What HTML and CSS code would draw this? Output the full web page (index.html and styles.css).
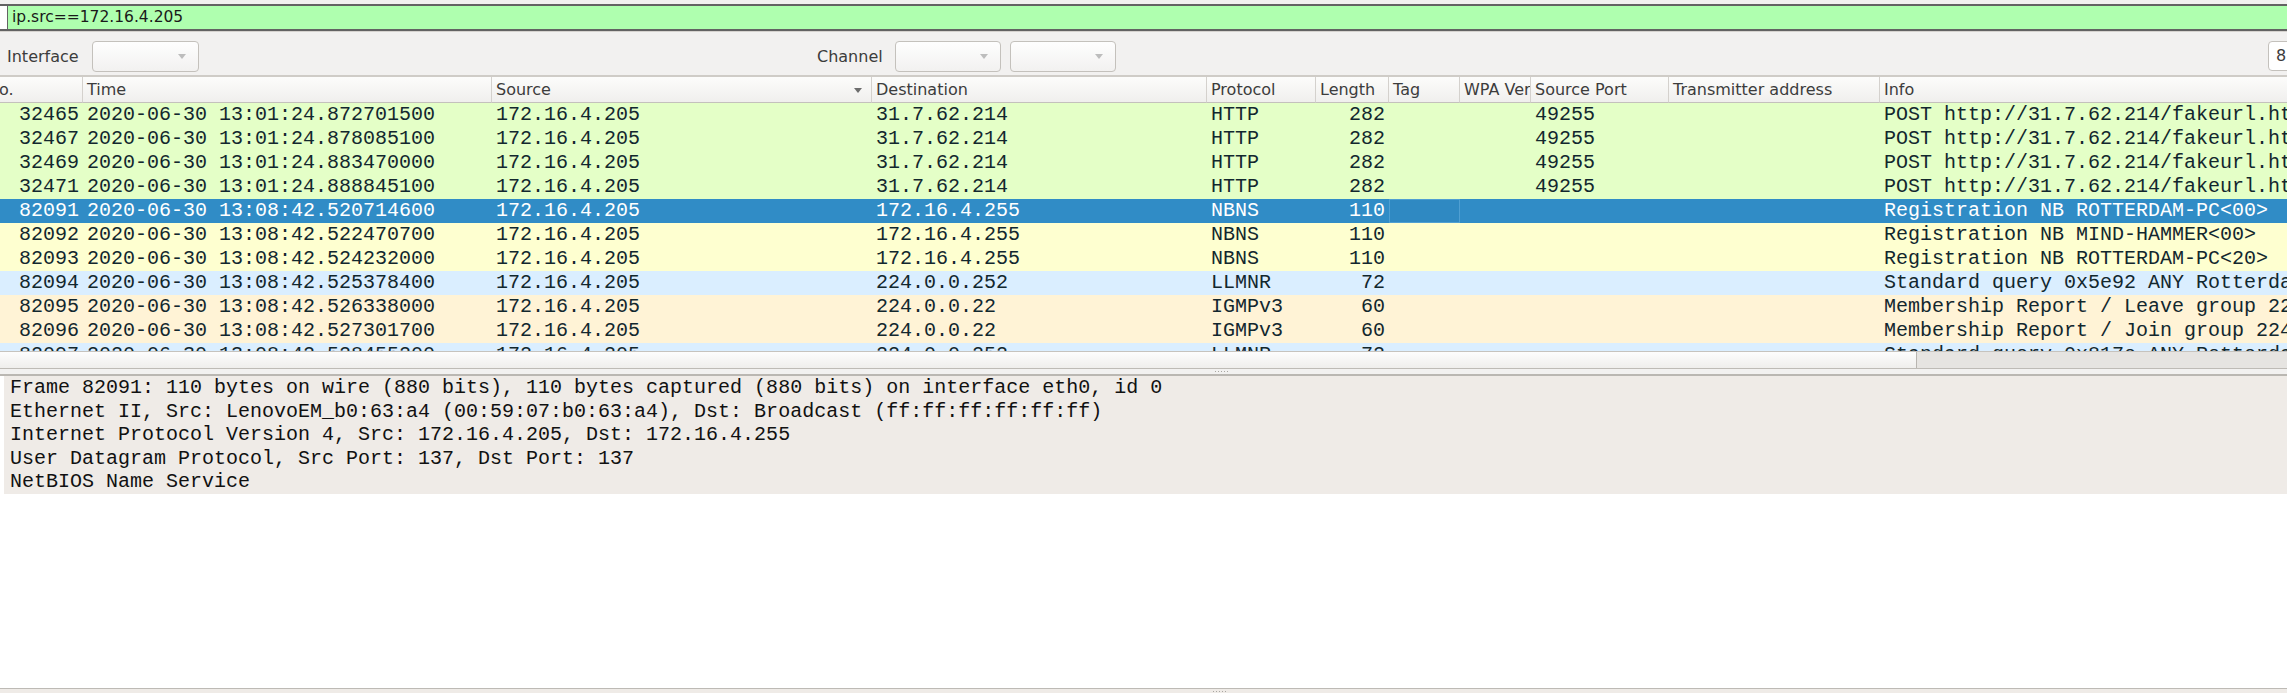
FILE: index.html
```html
<!DOCTYPE html>
<html>
<head>
<meta charset="utf-8">
<title>Wireshark</title>
<link rel="stylesheet" href="styles.css">
</head>
<body>
<div class="filterbar">
  <div class="filter"><span class="bm"></span><span class="ftext">ip.src==172.16.4.205</span></div>
</div>
<div class="toolbar">
  <span class="lbl lbl-if">Interface</span><span class="combo c1"></span>
  <span class="lbl lbl-ch">Channel</span><span class="combo c2"></span><span class="combo c3"></span>
  <span class="spin">8</span>
</div>
<div class="plist">
  <table class="packets">
    <colgroup>
      <col class="w-no"><col class="w-time"><col class="w-src"><col class="w-dst"><col class="w-proto"><col class="w-len"><col class="w-tag"><col class="w-wpa"><col class="w-sport"><col class="w-tx"><col class="w-info">
    </colgroup>
    <thead>
      <tr><th>No.</th><th>Time</th><th class="sorted"><span class="arrow"></span>Source</th><th>Destination</th><th>Protocol</th><th>Length</th><th>Tag</th><th>WPA Version</th><th>Source Port</th><th>Transmitter address</th><th class="last">Info</th></tr>
    </thead>
    <tbody>
      <tr class="http"><td class="r">32465</td><td>2020-06-30 13:01:24.872701500</td><td>172.16.4.205</td><td>31.7.62.214</td><td>HTTP</td><td class="r">282</td><td></td><td></td><td>49255</td><td></td><td>POST http://31.7.62.214/fakeurl.htm HTTP/1.1  (application/x-www-form-urlencoded)</td></tr>
      <tr class="http"><td class="r">32467</td><td>2020-06-30 13:01:24.878085100</td><td>172.16.4.205</td><td>31.7.62.214</td><td>HTTP</td><td class="r">282</td><td></td><td></td><td>49255</td><td></td><td>POST http://31.7.62.214/fakeurl.htm HTTP/1.1  (application/x-www-form-urlencoded)</td></tr>
      <tr class="http"><td class="r">32469</td><td>2020-06-30 13:01:24.883470000</td><td>172.16.4.205</td><td>31.7.62.214</td><td>HTTP</td><td class="r">282</td><td></td><td></td><td>49255</td><td></td><td>POST http://31.7.62.214/fakeurl.htm HTTP/1.1  (application/x-www-form-urlencoded)</td></tr>
      <tr class="http"><td class="r">32471</td><td>2020-06-30 13:01:24.888845100</td><td>172.16.4.205</td><td>31.7.62.214</td><td>HTTP</td><td class="r">282</td><td></td><td></td><td>49255</td><td></td><td>POST http://31.7.62.214/fakeurl.htm HTTP/1.1  (application/x-www-form-urlencoded)</td></tr>
      <tr class="sel"><td class="r">82091</td><td>2020-06-30 13:08:42.520714600</td><td>172.16.4.205</td><td>172.16.4.255</td><td>NBNS</td><td class="r">110</td><td class="focus"></td><td></td><td></td><td></td><td>Registration NB ROTTERDAM-PC&lt;00&gt;</td></tr>
      <tr class="nbns"><td class="r">82092</td><td>2020-06-30 13:08:42.522470700</td><td>172.16.4.205</td><td>172.16.4.255</td><td>NBNS</td><td class="r">110</td><td></td><td></td><td></td><td></td><td>Registration NB MIND-HAMMER&lt;00&gt;</td></tr>
      <tr class="nbns"><td class="r">82093</td><td>2020-06-30 13:08:42.524232000</td><td>172.16.4.205</td><td>172.16.4.255</td><td>NBNS</td><td class="r">110</td><td></td><td></td><td></td><td></td><td>Registration NB ROTTERDAM-PC&lt;20&gt;</td></tr>
      <tr class="udp"><td class="r">82094</td><td>2020-06-30 13:08:42.525378400</td><td>172.16.4.205</td><td>224.0.0.252</td><td>LLMNR</td><td class="r">72</td><td></td><td></td><td></td><td></td><td>Standard query 0x5e92 ANY Rotterdam-PC</td></tr>
      <tr class="igmp"><td class="r">82095</td><td>2020-06-30 13:08:42.526338000</td><td>172.16.4.205</td><td>224.0.0.22</td><td>IGMPv3</td><td class="r">60</td><td></td><td></td><td></td><td></td><td>Membership Report / Leave group 224.0.0.252</td></tr>
      <tr class="igmp"><td class="r">82096</td><td>2020-06-30 13:08:42.527301700</td><td>172.16.4.205</td><td>224.0.0.22</td><td>IGMPv3</td><td class="r">60</td><td></td><td></td><td></td><td></td><td>Membership Report / Join group 224.0.0.252</td></tr>
      <tr class="udp"><td class="r">82097</td><td>2020-06-30 13:08:42.528455200</td><td>172.16.4.205</td><td>224.0.0.252</td><td>LLMNR</td><td class="r">72</td><td></td><td></td><td></td><td></td><td>Standard query 0x817e ANY Rotterdam-PC</td></tr>
    </tbody>
  </table>
</div>
<div class="hscroll"><div class="thumb"></div><div class="trough"></div></div>
<div class="splitter"><span class="grip"></span></div>
<div class="details">
  <div class="dtree">
    <div class="dline">Frame 82091: 110 bytes on wire (880 bits), 110 bytes captured (880 bits) on interface eth0, id 0</div>
    <div class="dline">Ethernet II, Src: LenovoEM_b0:63:a4 (00:59:07:b0:63:a4), Dst: Broadcast (ff:ff:ff:ff:ff:ff)</div>
    <div class="dline">Internet Protocol Version 4, Src: 172.16.4.205, Dst: 172.16.4.255</div>
    <div class="dline">User Datagram Protocol, Src Port: 137, Dst Port: 137</div>
    <div class="dline">NetBIOS Name Service</div>
  </div>
</div>
<div class="bottomsplit"><span class="grip2"></span></div>
</body>
</html>
```

FILE: styles.css
```css
html, body {
  margin: 0;
  padding: 0;
}
body {
  width: 2287px;
  height: 693px;
  overflow: hidden;
  background: #ffffff;
  font-family: "DejaVu Sans", "Noto Sans", sans-serif;
}

/* display filter bar */
.filterbar {
  height: 31px;
  box-sizing: border-box;
  padding-top: 4px;
  background: #f2f1f0;
}
.filter {
  display: flex;
  height: 27px;
  box-sizing: border-box;
  border-top: 2px solid #636363;
  border-bottom: 2px solid #636363;
}
.bm {
  width: 7px;
  background: #ffffff;
  border-right: 1px solid #636363;
}
.ftext {
  flex: 1;
  background: #afffaf;
  padding-left: 4px;
  font-size: 15.5px;
  line-height: 23px;
  color: #1a1a1a;
  white-space: nowrap;
}

/* wireless toolbar */
.toolbar {
  height: 46px;
  box-sizing: border-box;
  display: flex;
  align-items: center;
  padding-top: 5px;
  padding-left: 7px;
  background: #f2f1f0;
  border-top: 1px solid #d6d3cf;
  border-bottom: 2px solid #cfccc7;
  overflow: hidden;
}
.lbl {
  font-size: 16px;
  color: #3c3c3c;
  white-space: nowrap;
  flex-shrink: 0;
}
.lbl-if { width: 85px; }
.lbl-ch { width: 78px; margin-left: 618px; }
.combo {
  flex-shrink: 0;
  height: 31px;
  box-sizing: border-box;
  border: 1px solid #c4c1bc;
  border-radius: 4px;
  background: linear-gradient(#fefefe, #f2f1f0);
  display: flex;
  align-items: center;
  justify-content: flex-end;
  padding-right: 12px;
}
.combo::after {
  content: "";
  display: block;
  width: 0;
  height: 0;
  border-left: 4px solid transparent;
  border-right: 4px solid transparent;
  border-top: 5px solid #bdbdbd;
}
.c1 { width: 107px; }
.c2 { width: 106px; }
.c3 { width: 106px; margin-left: 9px; }
.spin {
  flex-shrink: 0;
  width: 60px;
  height: 30px;
  box-sizing: border-box;
  margin-left: 1152px;
  border: 1px solid #c4c1bc;
  border-radius: 4px;
  background: #ffffff;
  padding-left: 7px;
  font-size: 16px;
  line-height: 28px;
  color: #3c3c3c;
}

/* packet list */
.plist {
  height: 274px;
  overflow: hidden;
}
.packets {
  table-layout: fixed;
  border-collapse: separate;
  border-spacing: 0;
  width: 2597px;
  margin-left: -17px;
}
.w-no { width: 100px; }
.w-time { width: 409px; }
.w-src { width: 380px; }
.w-dst { width: 335px; }
.w-proto { width: 109px; }
.w-len { width: 73px; }
.w-tag { width: 71px; }
.w-wpa { width: 71px; }
.w-sport { width: 138px; }
.w-tx { width: 211px; }
.w-info { width: 700px; }

.packets th {
  height: 26px;
  box-sizing: border-box;
  padding: 0 4px;
  text-align: left;
  font-weight: normal;
  font-size: 16px;
  line-height: 25px;
  color: #3c3c3c;
  background: linear-gradient(#fcfcfb, #f0efed);
  border-right: 1px solid #d4d1cd;
  border-bottom: 1px solid #c4c1bc;
  white-space: nowrap;
  overflow: hidden;
}
.packets th.last { border-right: none; }
.packets th .arrow {
  float: right;
  width: 0;
  height: 0;
  margin-top: 11px;
  margin-right: 5px;
  border-left: 4px solid transparent;
  border-right: 4px solid transparent;
  border-top: 5px solid #6d6d6d;
}
.packets td {
  height: 24px;
  padding: 0 4px;
  font-family: "Liberation Mono", monospace;
  font-size: 20px;
  line-height: 24px;
  color: #12272e;
  white-space: nowrap;
  overflow: hidden;
}
.packets td.r { text-align: right; }

.http td { background: #e4ffc7; }
.nbns td { background: #feffd0; }
.udp td { background: #daeeff; }
.igmp td { background: #fff3d6; }
.sel td { background: #308cc6; color: #ffffff; }
.sel td.focus {
  background: #2f89c2;
  box-shadow: inset 0 0 0 1px #4f9fd2;
}

/* horizontal scrollbar */
.hscroll {
  display: flex;
  height: 17px;
  box-sizing: border-box;
  border-top: 1px solid #c6c3be;
}
.thumb {
  width: 1916px;
  background: linear-gradient(#fdfdfd, #efeeec);
  border-right: 1px solid #b8b5b0;
}
.trough {
  flex: 1;
  background: #e6e4e1;
}

/* splitter */
.splitter {
  height: 8px;
  box-sizing: border-box;
  border-top: 1px solid #bebbb6;
  border-bottom: 2px solid #bab7b2;
  background: #f2f1f0;
  display: flex;
  align-items: center;
  padding-left: 1215px;
}
.grip {
  width: 14px;
  height: 1px;
  background: repeating-linear-gradient(90deg, #a9a6a1 0 1px, transparent 1px 3px);
}

/* packet details */
.details {
  height: 312px;
  box-sizing: border-box;
  padding-left: 4px;
  background: #ffffff;
}
.dtree {
  background: #efebe7;
  padding-left: 6px;
  font-family: "Liberation Mono", monospace;
  font-size: 20px;
  color: #111111;
}
.dline {
  height: 23.6px;
  line-height: 23.6px;
  white-space: nowrap;
}

.bottomsplit {
  height: 5px;
  box-sizing: border-box;
  border-top: 1px solid #bdbab5;
  background: #efebe7;
  display: flex;
  align-items: center;
  padding-left: 1213px;
}
.grip2 {
  width: 14px;
  height: 1px;
  background: repeating-linear-gradient(90deg, #a9a6a1 0 1px, transparent 1px 3px);
}
```
